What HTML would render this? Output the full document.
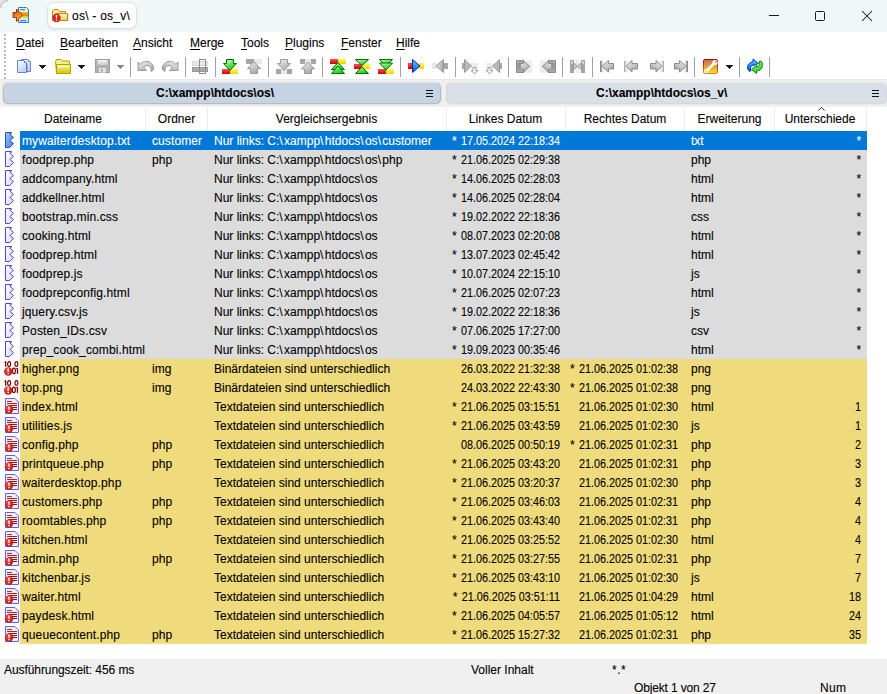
<!DOCTYPE html><html><head><meta charset="utf-8"><style>
*{margin:0;padding:0;box-sizing:border-box}
html,body{width:887px;height:694px;overflow:hidden;background:#fff}
body{position:relative;-webkit-text-stroke:0.1px currentColor;font-family:"Liberation Sans",sans-serif;font-size:12px;color:#000}
.a{position:absolute}
.t{position:absolute;white-space:pre;line-height:19px;height:19px}
.r{text-align:right}
.dt{letter-spacing:0;transform:scaleX(0.9);transform-origin:100% 50%}
.sp{letter-spacing:0.4px;font-size:13.5px;line-height:0}
svg{position:absolute;overflow:visible}
.u{text-decoration:underline;text-underline-offset:2px}
</style></head><body>

<div class="a" style="left:0;top:0;width:887px;height:32px;background:#eff7f7"></div>
<svg style="left:0;top:0" width="9" height="9"><path d="M0,0 H8 A8,8 0 0 0 0,8 Z" fill="#e4e6e6"/><path d="M0.5,8 A7.5,7.5 0 0 1 8,0.5" fill="none" stroke="#c8c8c8" stroke-width="1.3"/></svg>
<svg style="left:11px;top:5px" width="20" height="20" viewBox="0 0 20 20">
<defs><linearGradient id="lg1" x1="0" y1="0" x2="1" y2="1"><stop offset="0" stop-color="#ffffff"/><stop offset="1" stop-color="#c0dcf6"/></linearGradient>
<linearGradient id="lg2" x1="0" y1="0" x2="0.3" y2="1"><stop offset="0" stop-color="#c84020"/><stop offset="0.5" stop-color="#e87820"/><stop offset="1" stop-color="#f8d020"/></linearGradient></defs>
<path d="M7.5,2.5 H15.5 L17.5,4.5 V17.5 H7.5 Z" fill="url(#lg1)" stroke="#2a80d0"/>
<rect x="9" y="4" width="5" height="1.3" fill="#3a8ad8"/><rect x="9" y="7" width="8" height="5.5" fill="#f4c000"/><rect x="10" y="8.5" width="7" height="2.5" fill="#e49400"/><rect x="9" y="15" width="6" height="1.3" fill="#3a8ad8"/>
<path d="M2,7.5 H5.5 V4 L11.5,10 L5.5,16.5 V12.5 H2 Z" fill="url(#lg2)" stroke="#a82000" stroke-width="0.9"/>
</svg>
<div class="a" style="left:48px;top:3px;width:88px;height:25px;background:#fff;border-radius:6px;box-shadow:0 0 0 1px #dde2e2,0 1px 1px 1px rgba(0,0,0,0.06)"></div>
<svg style="left:48px;top:5px" width="22" height="22" viewBox="0 0 22 22">
<defs><linearGradient id="fg" x1="0" y1="0" x2="0" y2="1"><stop offset="0" stop-color="#fff6c0"/><stop offset="1" stop-color="#f0c850"/></linearGradient></defs>
<path d="M4.5,15.5 V6 L6,4.5 H10 L11.5,6.5 H17.5 V15.5 Z" fill="#fbe8a0" stroke="#c08a10"/>
<path d="M7.5,8.5 H19.5 V15.5 H4.5 Z" fill="url(#fg)" stroke="#c08a10"/>
<rect x="19.6" y="9" width="0.8" height="7" fill="#606080" opacity="0.5"/>
<circle cx="8.5" cy="13" r="4.2" fill="#d42424"/>
<path d="M7.7,10 H9.3 L9,13.6 H8 Z" fill="#fff"/><rect x="7.8" y="14.5" width="1.4" height="1.3" fill="#fff"/>
</svg>
<div class="t" style="left:72px;top:7px;letter-spacing:0.25px">os\ - os_v\</div>
<div class="a" style="left:769px;top:15px;width:10px;height:1px;background:#1a1a1a"></div>
<div class="a" style="left:815px;top:11px;width:10px;height:10px;border:1px solid #1a1a1a;border-radius:1.5px"></div>
<svg style="left:862px;top:11px" width="10" height="10"><path d="M0,0 L10,10 M10,0 L0,10" stroke="#1a1a1a" stroke-width="1.05"/></svg>
<div class="a" style="left:0;top:32px;width:887px;height:47px;background:#fff"></div>
<div class="a" style="left:4px;top:34px;width:2px;height:2px;background:#c4c4c4"></div><div class="a" style="left:4px;top:34px;width:1px;height:1px;background:#9a9a9a"></div>
<div class="a" style="left:4px;top:38px;width:2px;height:2px;background:#c4c4c4"></div><div class="a" style="left:4px;top:38px;width:1px;height:1px;background:#9a9a9a"></div>
<div class="a" style="left:4px;top:42px;width:2px;height:2px;background:#c4c4c4"></div><div class="a" style="left:4px;top:42px;width:1px;height:1px;background:#9a9a9a"></div>
<div class="a" style="left:4px;top:46px;width:2px;height:2px;background:#c4c4c4"></div><div class="a" style="left:4px;top:46px;width:1px;height:1px;background:#9a9a9a"></div>
<div class="a" style="left:4px;top:50px;width:2px;height:2px;background:#c4c4c4"></div><div class="a" style="left:4px;top:50px;width:1px;height:1px;background:#9a9a9a"></div>
<div class="a" style="left:4px;top:54px;width:2px;height:2px;background:#c4c4c4"></div><div class="a" style="left:4px;top:54px;width:1px;height:1px;background:#9a9a9a"></div>
<div class="a" style="left:4px;top:57px;width:2px;height:2px;background:#c4c4c4"></div><div class="a" style="left:4px;top:57px;width:1px;height:1px;background:#9a9a9a"></div>
<div class="a" style="left:4px;top:61px;width:2px;height:2px;background:#c4c4c4"></div><div class="a" style="left:4px;top:61px;width:1px;height:1px;background:#9a9a9a"></div>
<div class="a" style="left:4px;top:65px;width:2px;height:2px;background:#c4c4c4"></div><div class="a" style="left:4px;top:65px;width:1px;height:1px;background:#9a9a9a"></div>
<div class="a" style="left:4px;top:69px;width:2px;height:2px;background:#c4c4c4"></div><div class="a" style="left:4px;top:69px;width:1px;height:1px;background:#9a9a9a"></div>
<div class="a" style="left:4px;top:73px;width:2px;height:2px;background:#c4c4c4"></div><div class="a" style="left:4px;top:73px;width:1px;height:1px;background:#9a9a9a"></div>
<div class="a" style="left:4px;top:77px;width:2px;height:2px;background:#c4c4c4"></div><div class="a" style="left:4px;top:77px;width:1px;height:1px;background:#9a9a9a"></div>
<div class="t" style="left:16px;top:33px;line-height:20px;height:20px"><span class="u">D</span>atei</div>
<div class="t" style="left:60px;top:33px;line-height:20px;height:20px"><span class="u">B</span>earbeiten</div>
<div class="t" style="left:133px;top:33px;line-height:20px;height:20px"><span class="u">A</span>nsicht</div>
<div class="t" style="left:190px;top:33px;line-height:20px;height:20px"><span class="u">M</span>erge</div>
<div class="t" style="left:241px;top:33px;line-height:20px;height:20px"><span class="u">T</span>ools</div>
<div class="t" style="left:285px;top:33px;line-height:20px;height:20px"><span class="u">P</span>lugins</div>
<div class="t" style="left:341px;top:33px;line-height:20px;height:20px"><span class="u">F</span>enster</div>
<div class="t" style="left:396px;top:33px;line-height:20px;height:20px"><span class="u">H</span>ilfe</div>
<svg width="0" height="0" style="position:absolute"><defs><linearGradient id="gGreen" x1="0" y1="0" x2="0.6" y2="1"><stop offset="0" stop-color="#c0ffb0"/><stop offset="1" stop-color="#18c818"/></linearGradient><linearGradient id="gGray" x1="0" y1="0" x2="0.6" y2="1"><stop offset="0" stop-color="#f4f4f4"/><stop offset="1" stop-color="#a8a8a8"/></linearGradient><linearGradient id="gGrayH" x1="0" y1="0" x2="1" y2="0"><stop offset="0" stop-color="#f0f0f0"/><stop offset="1" stop-color="#a0a0a0"/></linearGradient><linearGradient id="gDoc" x1="0" y1="0" x2="0.7" y2="1"><stop offset="0" stop-color="#ffffff"/><stop offset="1" stop-color="#b8d0f4"/></linearGradient><linearGradient id="gFold" x1="0" y1="0" x2="0" y2="1"><stop offset="0" stop-color="#f8f090"/><stop offset="1" stop-color="#d8c800"/></linearGradient><linearGradient id="gOpt" x1="0" y1="0" x2="0" y2="1"><stop offset="0" stop-color="#d06858"/><stop offset="1" stop-color="#f8e020"/></linearGradient><linearGradient id="gOptB" x1="0" y1="0" x2="0" y2="1"><stop offset="0" stop-color="#a80000"/><stop offset="1" stop-color="#f08010"/></linearGradient><linearGradient id="gBlue" x1="0" y1="0" x2="0" y2="1"><stop offset="0" stop-color="#60d0ff"/><stop offset="1" stop-color="#0850d8"/></linearGradient><linearGradient id="gLO" x1="0" y1="0" x2="1" y2="1"><stop offset="0" stop-color="#ffffff"/><stop offset="1" stop-color="#d8d8f8"/></linearGradient><linearGradient id="gLOs" x1="0" y1="0" x2="1" y2="1"><stop offset="0" stop-color="#a0c8f0"/><stop offset="1" stop-color="#3c7fd8"/></linearGradient><linearGradient id="gRed" x1="0" y1="0" x2="0" y2="1"><stop offset="0" stop-color="#ff5050"/><stop offset="1" stop-color="#d00000"/></linearGradient><linearGradient id="gYel" x1="0" y1="0" x2="0" y2="1"><stop offset="0" stop-color="#fff860"/><stop offset="1" stop-color="#e8d800"/></linearGradient><linearGradient id="gSave" x1="0" y1="0" x2="0" y2="1"><stop offset="0" stop-color="#f8f8f8"/><stop offset="1" stop-color="#c8c8c8"/></linearGradient><radialGradient id="gExc" cx="0.4" cy="0.35" r="0.7"><stop offset="0" stop-color="#f05040"/><stop offset="1" stop-color="#b81010"/></radialGradient></defs></svg>
<svg style="left:14px;top:56px" width="20" height="20" viewBox="0 0 20 20"><path d="M7.5,3.5 H14 L16.5,6 V15.5 H7.5 Z" fill="url(#gDoc)" stroke="#6c80cc"/><path d="M3.5,4.5 H10 L12.5,7 V16.5 H3.5 Z" fill="url(#gDoc)" stroke="#6c80cc"/><rect x="12.6" y="7.5" width="0.9" height="9" fill="#405090" opacity="0.6"/><path d="M10,4.5 L12.5,7 H10 Z" fill="#5a9ae0"/><path d="M14,3.5 L16.5,6 H14 Z" fill="#5a9ae0"/></svg>
<div class="a" style="left:39px;top:65px;width:7px;height:1px;background:#1a1a1a"></div><div class="a" style="left:40px;top:66px;width:5px;height:1px;background:#1a1a1a"></div><div class="a" style="left:41px;top:67px;width:3px;height:1px;background:#1a1a1a"></div><div class="a" style="left:42px;top:68px;width:1px;height:1px;background:#1a1a1a"></div>
<svg style="left:54px;top:56px" width="20" height="20" viewBox="0 0 20 20"><path d="M1.5,5.5 L2.5,3.5 H7 L8.5,5 H15.5 V16.5 H2.5 Z" fill="#f4ee90" stroke="#b0a000"/><path d="M2.5,8.5 H16.5 V17.5 H2.5 Z" fill="url(#gFold)" stroke="#b0a000"/><rect x="4" y="9.5" width="11" height="2" fill="#fbf7c0"/></svg>
<div class="a" style="left:78px;top:65px;width:7px;height:1px;background:#1a1a1a"></div><div class="a" style="left:79px;top:66px;width:5px;height:1px;background:#1a1a1a"></div><div class="a" style="left:80px;top:67px;width:3px;height:1px;background:#1a1a1a"></div><div class="a" style="left:81px;top:68px;width:1px;height:1px;background:#1a1a1a"></div>
<svg style="left:93px;top:56px" width="20" height="20" viewBox="0 0 20 20"><rect x="2.5" y="3.5" width="14" height="13" fill="#b0b0b0" stroke="#9c9c9c"/><rect x="4.5" y="4" width="10" height="5" fill="url(#gSave)"/><rect x="6" y="12" width="7" height="4.5" fill="#e4e4e4"/><rect x="8" y="13" width="1.5" height="2.5" fill="#909090"/></svg>
<div class="a" style="left:117px;top:65px;width:7px;height:1px;background:#888"></div><div class="a" style="left:118px;top:66px;width:5px;height:1px;background:#888"></div><div class="a" style="left:119px;top:67px;width:3px;height:1px;background:#888"></div><div class="a" style="left:120px;top:68px;width:1px;height:1px;background:#888"></div>
<div class="a" style="left:130px;top:57px;width:1px;height:20px;background:#a0a0a0"></div>
<svg style="left:136px;top:57px" width="20" height="20" viewBox="0 0 20 20"><path d="M2,5 L4,7.5 C6,4.5 9,4 12,4.5 C16,5.5 18,9 17.5,12.5 L15,14.5 C15.5,11 14,8.5 11,8.5 C9,8.5 8,10 8.5,11.5 L10.5,13.5 H2 Z" fill="url(#gGray)" stroke="#999" stroke-width="1"/></svg>
<svg style="left:160px;top:57px" width="20" height="20" viewBox="0 0 20 20"><g transform="translate(20,0) scale(-1,1)"><path d="M2,5 L4,7.5 C6,4.5 9,4 12,4.5 C16,5.5 18,9 17.5,12.5 L15,14.5 C15.5,11 14,8.5 11,8.5 C9,8.5 8,10 8.5,11.5 L10.5,13.5 H2 Z" fill="url(#gGray)" stroke="#999" stroke-width="1"/></g></svg>
<div class="a" style="left:185px;top:57px;width:1px;height:20px;background:#a0a0a0"></div>
<svg style="left:190px;top:56px" width="20" height="20" viewBox="0 0 20 20"><rect x="2.5" y="5.5" width="15" height="4" fill="#e6e6e6" stroke="#dadada"/><rect x="2.5" y="11.5" width="15" height="4" fill="#acacac" stroke="#999"/><rect x="9.5" y="3.5" width="6" height="14" fill="none" stroke="#8c8c8c"/><rect x="10" y="4" width="5" height="1" fill="#fff"/><rect x="10" y="16" width="5" height="1" fill="#fff"/></svg>
<div class="a" style="left:215px;top:57px;width:1px;height:20px;background:#a0a0a0"></div>
<svg style="left:220px;top:56px" width="20" height="20" viewBox="0 0 20 20"><rect x="2" y="13" width="8" height="5" fill="url(#gRed)"/><rect x="10" y="13" width="8" height="5" fill="url(#gYel)"/><path d="M6.5,3.5 H13.5 V7.5 H16.5 L10,14.5 L3.5,7.5 H6.5 Z" fill="url(#gGreen)" stroke="#007000" stroke-width="1"/><path d="M8,5 H11 L9,7 Z" fill="#fff" opacity="0.7"/></svg>
<svg style="left:244px;top:56px" width="20" height="20" viewBox="0 0 20 20"><rect x="2" y="3" width="8" height="5" fill="#a8a8a8"/><rect x="10" y="3" width="8" height="5" fill="#e8e8e8"/><path d="M10,5.5 L16.5,12.5 H13.5 V17.5 H6.5 V12.5 H3.5 Z" fill="url(#gGray)" stroke="#999" stroke-width="1"/></svg>
<div class="a" style="left:268px;top:57px;width:1px;height:20px;background:#a0a0a0"></div>
<svg style="left:274px;top:56px" width="20" height="20" viewBox="0 0 20 20"><rect x="2" y="13" width="5" height="5" fill="#a4a4a4"/><rect x="7" y="13" width="6" height="5" fill="#e8e8e8"/><rect x="13" y="13" width="5" height="5" fill="#a4a4a4"/><path d="M6.5,3.5 H13.5 V7.5 H16.5 L10,14.5 L3.5,7.5 H6.5 Z" fill="url(#gGray)" stroke="#999" stroke-width="1"/></svg>
<svg style="left:298px;top:56px" width="20" height="20" viewBox="0 0 20 20"><rect x="2" y="3" width="5" height="5" fill="#a4a4a4"/><rect x="7" y="3" width="6" height="5" fill="#e8e8e8"/><rect x="13" y="3" width="5" height="5" fill="#a4a4a4"/><path d="M10,6 L16.5,13 H13.5 V17.5 H6.5 V13 H3.5 Z" fill="url(#gGray)" stroke="#999" stroke-width="1"/></svg>
<div class="a" style="left:322px;top:57px;width:1px;height:20px;background:#a0a0a0"></div>
<svg style="left:328px;top:56px" width="20" height="20" viewBox="0 0 20 20"><rect x="2" y="3" width="8" height="5" fill="url(#gRed)"/><rect x="10" y="3" width="8" height="5" fill="url(#gYel)"/><path d="M10,6.5 L16.5,13.5 H3.5 Z" fill="url(#gGreen)" stroke="#007000" stroke-width="1"/><path d="M10,10 L16.5,17.5 H3.5 Z" fill="url(#gGreen)" stroke="#007000" stroke-width="1"/></svg>
<svg style="left:352px;top:56px" width="20" height="20" viewBox="0 0 20 20"><rect x="2" y="8" width="8" height="5" fill="url(#gRed)"/><rect x="10" y="8" width="8" height="5" fill="url(#gYel)"/><path d="M3.5,3.5 H16.5 L10,9.5 Z" fill="url(#gGreen)" stroke="#007000" stroke-width="1"/><path d="M10,11 L16.5,17.5 H3.5 Z" fill="url(#gGreen)" stroke="#007000" stroke-width="1"/></svg>
<svg style="left:376px;top:56px" width="20" height="20" viewBox="0 0 20 20"><rect x="2" y="13" width="8" height="5" fill="url(#gRed)"/><rect x="10" y="13" width="8" height="5" fill="url(#gYel)"/><path d="M3.5,3.5 H16.5 L10,10 Z" fill="url(#gGreen)" stroke="#007000" stroke-width="1"/><path d="M3.5,7 H16.5 L10,14 Z" fill="url(#gGreen)" stroke="#007000" stroke-width="1"/></svg>
<div class="a" style="left:400px;top:57px;width:1px;height:20px;background:#a0a0a0"></div>
<svg style="left:406px;top:56px" width="20" height="20" viewBox="0 0 20 20"><rect x="2" y="7" width="5" height="6" fill="url(#gRed)"/><rect x="13" y="7" width="5" height="6" fill="url(#gYel)"/><path d="M6.5,3.5 L14,10 L6.5,16.5 Z" fill="url(#gBlue)" stroke="#0028a0"/></svg>
<svg style="left:430px;top:56px" width="20" height="20" viewBox="0 0 20 20"><rect x="2" y="7" width="5" height="6" fill="#e8e8e8"/><rect x="13" y="7" width="5" height="6" fill="#a8a8a8"/><path d="M13.5,3.5 L6,10 L13.5,16.5 Z" fill="url(#gGrayH)" stroke="#999"/></svg>
<div class="a" style="left:455px;top:57px;width:1px;height:20px;background:#a0a0a0"></div>
<svg style="left:460px;top:56px" width="20" height="20" viewBox="0 0 20 20"><rect x="2" y="7" width="3" height="6" fill="#a8a8a8"/><rect x="11" y="7" width="7" height="6" fill="#ececec"/><path d="M4.5,3.5 L11.5,10 L4.5,16.5 Z" fill="#b8b8b8" stroke="#999"/><path d="M13,11.5 H16 V14.5 H18 L14.5,17.8 L11,14.5 H13 Z" fill="#f4f4f4" stroke="#a0a0a0"/></svg>
<svg style="left:484px;top:56px" width="20" height="20" viewBox="0 0 20 20"><g transform="translate(20,0) scale(-1,1)"><rect x="2" y="7" width="3" height="6" fill="#a8a8a8"/><rect x="11" y="7" width="7" height="6" fill="#ececec"/><path d="M4.5,3.5 L11.5,10 L4.5,16.5 Z" fill="#b8b8b8" stroke="#999"/><path d="M13,11.5 H16 V14.5 H18 L14.5,17.8 L11,14.5 H13 Z" fill="#f4f4f4" stroke="#a0a0a0"/></g></svg>
<div class="a" style="left:508px;top:57px;width:1px;height:20px;background:#a0a0a0"></div>
<svg style="left:514px;top:56px" width="20" height="20" viewBox="0 0 20 20"><rect x="12" y="4" width="6" height="13" fill="#ececec"/><path d="M2.5,4.5 H9.5 V16.5 H2.5 Z" fill="#a8a8a8" stroke="#8c8c8c"/><path d="M4.5,7.5 H9.5 V4.5 L15.5,10.3 L9.5,16.5 V13 H4.5 Z" fill="url(#gGray)" stroke="#8c8c8c"/><rect x="5" y="8" width="2" height="4.5" fill="#9a9a9a"/></svg>
<svg style="left:538px;top:56px" width="20" height="20" viewBox="0 0 20 20"><g transform="translate(20,0) scale(-1,1)"><rect x="12" y="4" width="6" height="13" fill="#ececec"/><path d="M2.5,4.5 H9.5 V16.5 H2.5 Z" fill="#a8a8a8" stroke="#8c8c8c"/><path d="M4.5,7.5 H9.5 V4.5 L15.5,10.3 L9.5,16.5 V13 H4.5 Z" fill="url(#gGray)" stroke="#8c8c8c"/><rect x="5" y="8" width="2" height="4.5" fill="#9a9a9a"/></g></svg>
<div class="a" style="left:562px;top:57px;width:1px;height:20px;background:#a0a0a0"></div>
<svg style="left:568px;top:56px" width="20" height="20" viewBox="0 0 20 20"><rect x="7.5" y="4" width="4" height="13" fill="#ececec"/><rect x="2" y="4" width="4" height="13" fill="#a4a4a4"/><rect x="13" y="4" width="4" height="13" fill="#a4a4a4"/><path d="M5.5,6.5 L9.5,10.3 L5.5,14 Z" fill="#c8c8c8" stroke="#999"/><path d="M13.5,6.5 L9.5,10.3 L13.5,14 Z" fill="#c8c8c8" stroke="#999"/><rect x="3" y="5" width="2" height="3" fill="#d0d0d0"/><rect x="14" y="5" width="2" height="3" fill="#d0d0d0"/></svg>
<div class="a" style="left:592px;top:57px;width:1px;height:20px;background:#a0a0a0"></div>
<svg style="left:598px;top:56px" width="20" height="20" viewBox="0 0 20 20"><rect x="3.5" y="5" width="3" height="11" fill="#ececec"/><rect x="2" y="4.7" width="1.8" height="11.5" fill="#8c8c8c"/><path d="M4,10.3 L10.5,4.5 V7.5 H15.5 V13 H10.5 V16 Z" fill="url(#gGray)" stroke="#8c8c8c"/></svg>
<svg style="left:622px;top:56px" width="20" height="20" viewBox="0 0 20 20"><rect x="3.3" y="5" width="3" height="11" fill="#ececec"/><rect x="2.3" y="4.7" width="1" height="11.5" fill="#8c8c8c"/><path d="M4,10.3 L10,4.5 V7.5 H15.5 V13 H10 V16 Z" fill="url(#gGray)" stroke="#8c8c8c"/></svg>
<svg style="left:648px;top:56px" width="18" height="20" viewBox="0 0 18 20"><g transform="translate(18,0) scale(-1,1)"><rect x="3.3" y="5" width="3" height="11" fill="#ececec"/><rect x="2.3" y="4.7" width="1" height="11.5" fill="#8c8c8c"/><path d="M4,10.3 L10,4.5 V7.5 H15.5 V13 H10 V16 Z" fill="url(#gGray)" stroke="#8c8c8c"/></g></svg>
<svg style="left:672px;top:56px" width="18" height="20" viewBox="0 0 18 20"><g transform="translate(18,0) scale(-1,1)"><rect x="3.5" y="5" width="3" height="11" fill="#ececec"/><rect x="2" y="4.7" width="1.8" height="11.5" fill="#8c8c8c"/><path d="M4,10.3 L10.5,4.5 V7.5 H15.5 V13 H10.5 V16 Z" fill="url(#gGray)" stroke="#8c8c8c"/></g></svg>
<div class="a" style="left:694px;top:57px;width:1px;height:20px;background:#a0a0a0"></div>
<svg style="left:700px;top:56px" width="20" height="20" viewBox="0 0 20 20"><rect x="3.5" y="3.5" width="14" height="14" rx="1.5" fill="url(#gOpt)" stroke="url(#gOptB)"/><path d="M6,15.5 L14,7.5" stroke="#fff" stroke-width="2.5"/><circle cx="15" cy="6.5" r="2.6" fill="#fff"/><circle cx="5.8" cy="15.2" r="1.9" fill="#fff"/><path d="M14.5,5 L17,5.5 L16,7.5 Z" fill="#d07060"/><circle cx="5.8" cy="15.2" r="0.8" fill="#e8c020"/></svg>
<div class="a" style="left:726px;top:65px;width:7px;height:1px;background:#1a1a1a"></div><div class="a" style="left:727px;top:66px;width:5px;height:1px;background:#1a1a1a"></div><div class="a" style="left:728px;top:67px;width:3px;height:1px;background:#1a1a1a"></div><div class="a" style="left:729px;top:68px;width:1px;height:1px;background:#1a1a1a"></div>
<div class="a" style="left:739px;top:57px;width:1px;height:20px;background:#a0a0a0"></div>
<svg style="left:745px;top:56px" width="20" height="20" viewBox="0 0 20 20"><path d="M2.5,10.5 C3,8 5,6.5 8,5.5 V3 L13.5,7.5 L8.5,9.5 V8.5 C6.5,9.5 5.5,11 5.5,13 L6,14.5 L4.5,15.5 C3,14 2.3,12.5 2.5,10.5 Z" fill="url(#gBlue)" stroke="#0838c8"/><path d="M17.5,9.5 C17.3,12 15.5,14.5 11.5,15 V17.5 L6.5,13.5 L11.5,9.5 V11 C13.5,10.5 14.5,9 14.5,7.5 L14,5.5 L16,5 C17,6.3 17.6,7.8 17.5,9.5 Z" fill="url(#gGreen)" stroke="#009000"/></svg>
<div class="a" style="left:769px;top:57px;width:1px;height:20px;background:#a0a0a0"></div>
<div class="a" style="left:0;top:79px;width:887px;height:28px;background:#f0f0f0"></div>
<div class="a" style="left:0;top:79px;width:887px;height:1px;background:#e8e8e8"></div>
<div class="a" style="left:3.5px;top:82.5px;width:436px;height:20.5px;background:#c5d3e2;border-radius:4.5px;box-shadow:0 0.3px 1.5px 0.2px rgba(0,0,0,0.28)"></div>
<div class="a" style="left:447px;top:82.5px;width:439px;height:20.5px;background:#d8dfe6;border-radius:4.5px;box-shadow:0 0.3px 1.5px 0.2px rgba(0,0,0,0.12)"></div>
<div class="t" style="left:156px;top:83px;line-height:20px;font-weight:bold">C:\xampp\htdocs\os\</div>
<div class="t" style="left:596px;top:83px;line-height:20px;font-weight:bold">C:\xampp\htdocs\os_v\</div>
<div class="a" style="left:426px;top:90px;width:7px;height:1px;background:#111"></div>
<div class="a" style="left:426px;top:93px;width:7px;height:1px;background:#111"></div>
<div class="a" style="left:426px;top:96px;width:7px;height:1px;background:#111"></div>
<div class="a" style="left:872px;top:90px;width:7px;height:1px;background:#111"></div>
<div class="a" style="left:872px;top:93px;width:7px;height:1px;background:#111"></div>
<div class="a" style="left:872px;top:96px;width:7px;height:1px;background:#111"></div>
<div class="t" style="left:0px;top:107px;width:146px;text-align:center;line-height:24px;height:24px">Dateiname</div>
<div class="a" style="left:145px;top:107px;width:1px;height:24px;background:#ececec"></div>
<div class="t" style="left:146px;top:107px;width:61px;text-align:center;line-height:24px;height:24px">Ordner</div>
<div class="a" style="left:207px;top:107px;width:1px;height:24px;background:#ececec"></div>
<div class="t" style="left:207px;top:107px;width:239px;text-align:center;line-height:24px;height:24px">Vergleichsergebnis</div>
<div class="a" style="left:446px;top:107px;width:1px;height:24px;background:#ececec"></div>
<div class="t" style="left:446px;top:107px;width:119px;text-align:center;line-height:24px;height:24px">Linkes Datum</div>
<div class="a" style="left:565px;top:107px;width:1px;height:24px;background:#ececec"></div>
<div class="t" style="left:565px;top:107px;width:120px;text-align:center;line-height:24px;height:24px">Rechtes Datum</div>
<div class="a" style="left:684px;top:107px;width:1px;height:24px;background:#ececec"></div>
<div class="t" style="left:685px;top:107px;width:89px;text-align:center;line-height:24px;height:24px">Erweiterung</div>
<div class="a" style="left:774px;top:107px;width:1px;height:24px;background:#ececec"></div>
<div class="t" style="left:774px;top:107px;width:92px;text-align:center;line-height:24px;height:24px">Unterschiede</div>
<div class="a" style="left:866px;top:107px;width:1px;height:24px;background:#ececec"></div>
<svg style="left:817px;top:106px" width="9" height="6"><path d="M1.3,4.6 L4.5,1.4 L7.7,4.6" fill="none" stroke="#333" stroke-width="1"/></svg>
<div class="a" style="left:20px;top:131px;width:847px;height:19px;background:#0078d7"></div>
<svg style="left:5px;top:132px" width="10" height="17" viewBox="0 0 10 17"><path d="M0.5,0.5 H6.5 V1.3 L4.8,2 L8.5,5.5 L4.8,8.5 L8.5,11.5 L4.5,15.5 H0.5 Z" fill="url(#gLOs)" stroke="#2050c0" stroke-width="1"/></svg>
<div class="t" style="left:22px;letter-spacing:0.12px;top:132px;color:#fff">mywaiterdesktop.txt</div>
<div class="t" style="left:152px;letter-spacing:0.1px;top:132px;color:#fff">customer</div>
<div class="t" style="left:214px;top:132px;color:#fff">Nur links: C:<span style="letter-spacing:1.4px">\</span>xampp<span style="letter-spacing:1.4px">\</span>htdocs<span style="letter-spacing:1.4px">\</span>os<span style="letter-spacing:1.4px">\</span>customer</div>
<div class="t r dt" style="left:425px;width:135px;top:132px;color:#fff"><span class="sp">* </span>17.05.2024 22:18:34</div>
<div class="t" style="left:691px;top:132px;color:#fff">txt</div>
<div class="t r dt" style="left:773px;width:88px;top:132px;color:#fff"><span style="position:relative;top:-1px;left:0px;font-size:13px">*</span></div>
<div class="a" style="left:20px;top:150px;width:847px;height:19px;background:#dcdcdc"></div>
<svg style="left:5px;top:151px" width="10" height="17" viewBox="0 0 10 17"><path d="M0.5,0.5 H6.5 V1.3 L4.8,2 L8.5,5.5 L4.8,8.5 L8.5,11.5 L4.5,15.5 H0.5 Z" fill="url(#gLO)" stroke="#4848e8" stroke-width="1"/></svg>
<div class="t" style="left:22px;letter-spacing:0.12px;top:151px;color:#000">foodprep.php</div>
<div class="t" style="left:152px;letter-spacing:0.1px;top:151px;color:#000">php</div>
<div class="t" style="left:214px;top:151px;color:#000">Nur links: C:<span style="letter-spacing:1.4px">\</span>xampp<span style="letter-spacing:1.4px">\</span>htdocs<span style="letter-spacing:1.4px">\</span>os<span style="letter-spacing:1.4px">\</span>php</div>
<div class="t r dt" style="left:425px;width:135px;top:151px;color:#000"><span class="sp">* </span>21.06.2025 02:29:38</div>
<div class="t" style="left:691px;top:151px;color:#000">php</div>
<div class="t r dt" style="left:773px;width:88px;top:151px;color:#000"><span style="position:relative;top:-1px;left:0px;font-size:13px">*</span></div>
<div class="a" style="left:20px;top:169px;width:847px;height:19px;background:#dcdcdc"></div>
<svg style="left:5px;top:170px" width="10" height="17" viewBox="0 0 10 17"><path d="M0.5,0.5 H6.5 V1.3 L4.8,2 L8.5,5.5 L4.8,8.5 L8.5,11.5 L4.5,15.5 H0.5 Z" fill="url(#gLO)" stroke="#4848e8" stroke-width="1"/></svg>
<div class="t" style="left:22px;letter-spacing:0.12px;top:170px;color:#000">addcompany.html</div>
<div class="t" style="left:214px;top:170px;color:#000">Nur links: C:<span style="letter-spacing:1.4px">\</span>xampp<span style="letter-spacing:1.4px">\</span>htdocs<span style="letter-spacing:1.4px">\</span>os</div>
<div class="t r dt" style="left:425px;width:135px;top:170px;color:#000"><span class="sp">* </span>14.06.2025 02:28:03</div>
<div class="t" style="left:691px;top:170px;color:#000">html</div>
<div class="t r dt" style="left:773px;width:88px;top:170px;color:#000"><span style="position:relative;top:-1px;left:0px;font-size:13px">*</span></div>
<div class="a" style="left:20px;top:188px;width:847px;height:19px;background:#dcdcdc"></div>
<svg style="left:5px;top:189px" width="10" height="17" viewBox="0 0 10 17"><path d="M0.5,0.5 H6.5 V1.3 L4.8,2 L8.5,5.5 L4.8,8.5 L8.5,11.5 L4.5,15.5 H0.5 Z" fill="url(#gLO)" stroke="#4848e8" stroke-width="1"/></svg>
<div class="t" style="left:22px;letter-spacing:0.12px;top:189px;color:#000">addkellner.html</div>
<div class="t" style="left:214px;top:189px;color:#000">Nur links: C:<span style="letter-spacing:1.4px">\</span>xampp<span style="letter-spacing:1.4px">\</span>htdocs<span style="letter-spacing:1.4px">\</span>os</div>
<div class="t r dt" style="left:425px;width:135px;top:189px;color:#000"><span class="sp">* </span>14.06.2025 02:28:04</div>
<div class="t" style="left:691px;top:189px;color:#000">html</div>
<div class="t r dt" style="left:773px;width:88px;top:189px;color:#000"><span style="position:relative;top:-1px;left:0px;font-size:13px">*</span></div>
<div class="a" style="left:20px;top:207px;width:847px;height:19px;background:#dcdcdc"></div>
<svg style="left:5px;top:208px" width="10" height="17" viewBox="0 0 10 17"><path d="M0.5,0.5 H6.5 V1.3 L4.8,2 L8.5,5.5 L4.8,8.5 L8.5,11.5 L4.5,15.5 H0.5 Z" fill="url(#gLO)" stroke="#4848e8" stroke-width="1"/></svg>
<div class="t" style="left:22px;letter-spacing:0.12px;top:208px;color:#000">bootstrap.min.css</div>
<div class="t" style="left:214px;top:208px;color:#000">Nur links: C:<span style="letter-spacing:1.4px">\</span>xampp<span style="letter-spacing:1.4px">\</span>htdocs<span style="letter-spacing:1.4px">\</span>os</div>
<div class="t r dt" style="left:425px;width:135px;top:208px;color:#000"><span class="sp">* </span>19.02.2022 22:18:36</div>
<div class="t" style="left:691px;top:208px;color:#000">css</div>
<div class="t r dt" style="left:773px;width:88px;top:208px;color:#000"><span style="position:relative;top:-1px;left:0px;font-size:13px">*</span></div>
<div class="a" style="left:20px;top:226px;width:847px;height:19px;background:#dcdcdc"></div>
<svg style="left:5px;top:227px" width="10" height="17" viewBox="0 0 10 17"><path d="M0.5,0.5 H6.5 V1.3 L4.8,2 L8.5,5.5 L4.8,8.5 L8.5,11.5 L4.5,15.5 H0.5 Z" fill="url(#gLO)" stroke="#4848e8" stroke-width="1"/></svg>
<div class="t" style="left:22px;letter-spacing:0.12px;top:227px;color:#000">cooking.html</div>
<div class="t" style="left:214px;top:227px;color:#000">Nur links: C:<span style="letter-spacing:1.4px">\</span>xampp<span style="letter-spacing:1.4px">\</span>htdocs<span style="letter-spacing:1.4px">\</span>os</div>
<div class="t r dt" style="left:425px;width:135px;top:227px;color:#000"><span class="sp">* </span>08.07.2023 02:20:08</div>
<div class="t" style="left:691px;top:227px;color:#000">html</div>
<div class="t r dt" style="left:773px;width:88px;top:227px;color:#000"><span style="position:relative;top:-1px;left:0px;font-size:13px">*</span></div>
<div class="a" style="left:20px;top:245px;width:847px;height:19px;background:#dcdcdc"></div>
<svg style="left:5px;top:246px" width="10" height="17" viewBox="0 0 10 17"><path d="M0.5,0.5 H6.5 V1.3 L4.8,2 L8.5,5.5 L4.8,8.5 L8.5,11.5 L4.5,15.5 H0.5 Z" fill="url(#gLO)" stroke="#4848e8" stroke-width="1"/></svg>
<div class="t" style="left:22px;letter-spacing:0.12px;top:246px;color:#000">foodprep.html</div>
<div class="t" style="left:214px;top:246px;color:#000">Nur links: C:<span style="letter-spacing:1.4px">\</span>xampp<span style="letter-spacing:1.4px">\</span>htdocs<span style="letter-spacing:1.4px">\</span>os</div>
<div class="t r dt" style="left:425px;width:135px;top:246px;color:#000"><span class="sp">* </span>13.07.2023 02:45:42</div>
<div class="t" style="left:691px;top:246px;color:#000">html</div>
<div class="t r dt" style="left:773px;width:88px;top:246px;color:#000"><span style="position:relative;top:-1px;left:0px;font-size:13px">*</span></div>
<div class="a" style="left:20px;top:264px;width:847px;height:19px;background:#dcdcdc"></div>
<svg style="left:5px;top:265px" width="10" height="17" viewBox="0 0 10 17"><path d="M0.5,0.5 H6.5 V1.3 L4.8,2 L8.5,5.5 L4.8,8.5 L8.5,11.5 L4.5,15.5 H0.5 Z" fill="url(#gLO)" stroke="#4848e8" stroke-width="1"/></svg>
<div class="t" style="left:22px;letter-spacing:0.12px;top:265px;color:#000">foodprep.js</div>
<div class="t" style="left:214px;top:265px;color:#000">Nur links: C:<span style="letter-spacing:1.4px">\</span>xampp<span style="letter-spacing:1.4px">\</span>htdocs<span style="letter-spacing:1.4px">\</span>os</div>
<div class="t r dt" style="left:425px;width:135px;top:265px;color:#000"><span class="sp">* </span>10.07.2024 22:15:10</div>
<div class="t" style="left:691px;top:265px;color:#000">js</div>
<div class="t r dt" style="left:773px;width:88px;top:265px;color:#000"><span style="position:relative;top:-1px;left:0px;font-size:13px">*</span></div>
<div class="a" style="left:20px;top:283px;width:847px;height:19px;background:#dcdcdc"></div>
<svg style="left:5px;top:284px" width="10" height="17" viewBox="0 0 10 17"><path d="M0.5,0.5 H6.5 V1.3 L4.8,2 L8.5,5.5 L4.8,8.5 L8.5,11.5 L4.5,15.5 H0.5 Z" fill="url(#gLO)" stroke="#4848e8" stroke-width="1"/></svg>
<div class="t" style="left:22px;letter-spacing:0.12px;top:284px;color:#000">foodprepconfig.html</div>
<div class="t" style="left:214px;top:284px;color:#000">Nur links: C:<span style="letter-spacing:1.4px">\</span>xampp<span style="letter-spacing:1.4px">\</span>htdocs<span style="letter-spacing:1.4px">\</span>os</div>
<div class="t r dt" style="left:425px;width:135px;top:284px;color:#000"><span class="sp">* </span>21.06.2025 02:07:23</div>
<div class="t" style="left:691px;top:284px;color:#000">html</div>
<div class="t r dt" style="left:773px;width:88px;top:284px;color:#000"><span style="position:relative;top:-1px;left:0px;font-size:13px">*</span></div>
<div class="a" style="left:20px;top:302px;width:847px;height:19px;background:#dcdcdc"></div>
<svg style="left:5px;top:303px" width="10" height="17" viewBox="0 0 10 17"><path d="M0.5,0.5 H6.5 V1.3 L4.8,2 L8.5,5.5 L4.8,8.5 L8.5,11.5 L4.5,15.5 H0.5 Z" fill="url(#gLO)" stroke="#4848e8" stroke-width="1"/></svg>
<div class="t" style="left:22px;letter-spacing:0.12px;top:303px;color:#000">jquery.csv.js</div>
<div class="t" style="left:214px;top:303px;color:#000">Nur links: C:<span style="letter-spacing:1.4px">\</span>xampp<span style="letter-spacing:1.4px">\</span>htdocs<span style="letter-spacing:1.4px">\</span>os</div>
<div class="t r dt" style="left:425px;width:135px;top:303px;color:#000"><span class="sp">* </span>19.02.2022 22:18:36</div>
<div class="t" style="left:691px;top:303px;color:#000">js</div>
<div class="t r dt" style="left:773px;width:88px;top:303px;color:#000"><span style="position:relative;top:-1px;left:0px;font-size:13px">*</span></div>
<div class="a" style="left:20px;top:321px;width:847px;height:19px;background:#dcdcdc"></div>
<svg style="left:5px;top:322px" width="10" height="17" viewBox="0 0 10 17"><path d="M0.5,0.5 H6.5 V1.3 L4.8,2 L8.5,5.5 L4.8,8.5 L8.5,11.5 L4.5,15.5 H0.5 Z" fill="url(#gLO)" stroke="#4848e8" stroke-width="1"/></svg>
<div class="t" style="left:22px;letter-spacing:0.12px;top:322px;color:#000">Posten_IDs.csv</div>
<div class="t" style="left:214px;top:322px;color:#000">Nur links: C:<span style="letter-spacing:1.4px">\</span>xampp<span style="letter-spacing:1.4px">\</span>htdocs<span style="letter-spacing:1.4px">\</span>os</div>
<div class="t r dt" style="left:425px;width:135px;top:322px;color:#000"><span class="sp">* </span>07.06.2025 17:27:00</div>
<div class="t" style="left:691px;top:322px;color:#000">csv</div>
<div class="t r dt" style="left:773px;width:88px;top:322px;color:#000"><span style="position:relative;top:-1px;left:0px;font-size:13px">*</span></div>
<div class="a" style="left:20px;top:340px;width:847px;height:19px;background:#dcdcdc"></div>
<svg style="left:5px;top:341px" width="10" height="17" viewBox="0 0 10 17"><path d="M0.5,0.5 H6.5 V1.3 L4.8,2 L8.5,5.5 L4.8,8.5 L8.5,11.5 L4.5,15.5 H0.5 Z" fill="url(#gLO)" stroke="#4848e8" stroke-width="1"/></svg>
<div class="t" style="left:22px;letter-spacing:0.12px;top:341px;color:#000">prep_cook_combi.html</div>
<div class="t" style="left:214px;top:341px;color:#000">Nur links: C:<span style="letter-spacing:1.4px">\</span>xampp<span style="letter-spacing:1.4px">\</span>htdocs<span style="letter-spacing:1.4px">\</span>os</div>
<div class="t r dt" style="left:425px;width:135px;top:341px;color:#000"><span class="sp">* </span>19.09.2023 00:35:46</div>
<div class="t" style="left:691px;top:341px;color:#000">html</div>
<div class="t r dt" style="left:773px;width:88px;top:341px;color:#000"><span style="position:relative;top:-1px;left:0px;font-size:13px">*</span></div>
<div class="a" style="left:20px;top:359px;width:847px;height:19px;background:#efdb7c"></div>
<svg style="left:0px;top:359px" width="20" height="19" viewBox="0 0 20 19"><rect x="5" y="2.3" width="1.3" height="5.5" fill="#800000"/><path d="M4.3,3.6 L5.6,2.3" stroke="#800000" stroke-width="1"/><ellipse cx="9.1" cy="5" rx="1.5" ry="2.45" fill="none" stroke="#800000" stroke-width="1.2"/><ellipse cx="16.4" cy="5" rx="1.45" ry="2.45" fill="none" stroke="#800000" stroke-width="1.2"/><ellipse cx="13.9" cy="11.9" rx="1.45" ry="2.7" fill="none" stroke="#800000" stroke-width="1.2"/><rect x="16.8" y="9.1" width="1.3" height="5.8" fill="#800000"/><path d="M16,10.3 L17.2,9.1" stroke="#800000" stroke-width="1"/><circle cx="8.2" cy="12.5" r="4.2" fill="url(#gExc)"/><path d="M7.4,9.4 H9 L8.7,13.2 H7.7 Z" fill="#fff"/><rect x="7.5" y="14" width="1.4" height="1.3" fill="#fff"/></svg>
<div class="t" style="left:22px;letter-spacing:0.12px;top:360px;color:#000">higher.png</div>
<div class="t" style="left:152px;letter-spacing:0.1px;top:360px;color:#000">img</div>
<div class="t" style="left:214px;top:360px;color:#000">Binärdateien sind unterschiedlich</div>
<div class="t r dt" style="left:425px;width:135px;top:360px;color:#000">26.03.2022 21:32:38</div>
<div class="t r dt" style="left:543px;width:135px;top:360px;color:#000"><span class="sp">* </span>21.06.2025 01:02:38</div>
<div class="t" style="left:691px;top:360px;color:#000">png</div>
<div class="a" style="left:20px;top:378px;width:847px;height:19px;background:#efdb7c"></div>
<svg style="left:0px;top:378px" width="20" height="19" viewBox="0 0 20 19"><rect x="5" y="2.3" width="1.3" height="5.5" fill="#800000"/><path d="M4.3,3.6 L5.6,2.3" stroke="#800000" stroke-width="1"/><ellipse cx="9.1" cy="5" rx="1.5" ry="2.45" fill="none" stroke="#800000" stroke-width="1.2"/><ellipse cx="16.4" cy="5" rx="1.45" ry="2.45" fill="none" stroke="#800000" stroke-width="1.2"/><ellipse cx="13.9" cy="11.9" rx="1.45" ry="2.7" fill="none" stroke="#800000" stroke-width="1.2"/><rect x="16.8" y="9.1" width="1.3" height="5.8" fill="#800000"/><path d="M16,10.3 L17.2,9.1" stroke="#800000" stroke-width="1"/><circle cx="8.2" cy="12.5" r="4.2" fill="url(#gExc)"/><path d="M7.4,9.4 H9 L8.7,13.2 H7.7 Z" fill="#fff"/><rect x="7.5" y="14" width="1.4" height="1.3" fill="#fff"/></svg>
<div class="t" style="left:22px;letter-spacing:0.12px;top:379px;color:#000">top.png</div>
<div class="t" style="left:152px;letter-spacing:0.1px;top:379px;color:#000">img</div>
<div class="t" style="left:214px;top:379px;color:#000">Binärdateien sind unterschiedlich</div>
<div class="t r dt" style="left:425px;width:135px;top:379px;color:#000">24.03.2022 22:43:30</div>
<div class="t r dt" style="left:543px;width:135px;top:379px;color:#000"><span class="sp">* </span>21.06.2025 01:02:38</div>
<div class="t" style="left:691px;top:379px;color:#000">png</div>
<div class="a" style="left:20px;top:397px;width:847px;height:19px;background:#efdb7c"></div>
<svg style="left:4px;top:398px" width="16" height="17" viewBox="0 0 16 17"><path d="M1.5,0.5 H11 L14.5,4 V15.5 H1.5 Z" fill="#eeeefc" stroke="#6060f0"/><rect x="3" y="3" width="5" height="1" fill="#d02020"/><rect x="3" y="5" width="10" height="1" fill="#c01818"/><rect x="4" y="7" width="9" height="1" fill="#a01010"/><rect x="4" y="9" width="9" height="1" fill="#901010"/><rect x="4" y="11" width="9" height="1" fill="#801010"/><circle cx="5" cy="11.5" r="4.2" fill="url(#gExc)"/><path d="M4.2,8.4 H5.8 L5.5,12.2 H4.5 Z" fill="#fff"/><rect x="4.3" y="13" width="1.4" height="1.3" fill="#fff"/></svg>
<div class="t" style="left:22px;letter-spacing:0.12px;top:398px;color:#000">index.html</div>
<div class="t" style="left:214px;top:398px;color:#000">Textdateien sind unterschiedlich</div>
<div class="t r dt" style="left:425px;width:135px;top:398px;color:#000"><span class="sp">* </span>21.06.2025 03:15:51</div>
<div class="t r dt" style="left:543px;width:135px;top:398px;color:#000">21.06.2025 01:02:30</div>
<div class="t" style="left:691px;top:398px;color:#000">html</div>
<div class="t r dt" style="left:773px;width:88px;top:398px;color:#000">1</div>
<div class="a" style="left:20px;top:416px;width:847px;height:19px;background:#efdb7c"></div>
<svg style="left:4px;top:417px" width="16" height="17" viewBox="0 0 16 17"><path d="M1.5,0.5 H11 L14.5,4 V15.5 H1.5 Z" fill="#eeeefc" stroke="#6060f0"/><rect x="3" y="3" width="5" height="1" fill="#d02020"/><rect x="3" y="5" width="10" height="1" fill="#c01818"/><rect x="4" y="7" width="9" height="1" fill="#a01010"/><rect x="4" y="9" width="9" height="1" fill="#901010"/><rect x="4" y="11" width="9" height="1" fill="#801010"/><circle cx="5" cy="11.5" r="4.2" fill="url(#gExc)"/><path d="M4.2,8.4 H5.8 L5.5,12.2 H4.5 Z" fill="#fff"/><rect x="4.3" y="13" width="1.4" height="1.3" fill="#fff"/></svg>
<div class="t" style="left:22px;letter-spacing:0.12px;top:417px;color:#000">utilities.js</div>
<div class="t" style="left:214px;top:417px;color:#000">Textdateien sind unterschiedlich</div>
<div class="t r dt" style="left:425px;width:135px;top:417px;color:#000"><span class="sp">* </span>21.06.2025 03:43:59</div>
<div class="t r dt" style="left:543px;width:135px;top:417px;color:#000">21.06.2025 01:02:30</div>
<div class="t" style="left:691px;top:417px;color:#000">js</div>
<div class="t r dt" style="left:773px;width:88px;top:417px;color:#000">1</div>
<div class="a" style="left:20px;top:435px;width:847px;height:19px;background:#efdb7c"></div>
<svg style="left:4px;top:436px" width="16" height="17" viewBox="0 0 16 17"><path d="M1.5,0.5 H11 L14.5,4 V15.5 H1.5 Z" fill="#eeeefc" stroke="#6060f0"/><rect x="3" y="3" width="5" height="1" fill="#d02020"/><rect x="3" y="5" width="10" height="1" fill="#c01818"/><rect x="4" y="7" width="9" height="1" fill="#a01010"/><rect x="4" y="9" width="9" height="1" fill="#901010"/><rect x="4" y="11" width="9" height="1" fill="#801010"/><circle cx="5" cy="11.5" r="4.2" fill="url(#gExc)"/><path d="M4.2,8.4 H5.8 L5.5,12.2 H4.5 Z" fill="#fff"/><rect x="4.3" y="13" width="1.4" height="1.3" fill="#fff"/></svg>
<div class="t" style="left:22px;letter-spacing:0.12px;top:436px;color:#000">config.php</div>
<div class="t" style="left:152px;letter-spacing:0.1px;top:436px;color:#000">php</div>
<div class="t" style="left:214px;top:436px;color:#000">Textdateien sind unterschiedlich</div>
<div class="t r dt" style="left:425px;width:135px;top:436px;color:#000">08.06.2025 00:50:19</div>
<div class="t r dt" style="left:543px;width:135px;top:436px;color:#000"><span class="sp">* </span>21.06.2025 01:02:31</div>
<div class="t" style="left:691px;top:436px;color:#000">php</div>
<div class="t r dt" style="left:773px;width:88px;top:436px;color:#000">2</div>
<div class="a" style="left:20px;top:454px;width:847px;height:19px;background:#efdb7c"></div>
<svg style="left:4px;top:455px" width="16" height="17" viewBox="0 0 16 17"><path d="M1.5,0.5 H11 L14.5,4 V15.5 H1.5 Z" fill="#eeeefc" stroke="#6060f0"/><rect x="3" y="3" width="5" height="1" fill="#d02020"/><rect x="3" y="5" width="10" height="1" fill="#c01818"/><rect x="4" y="7" width="9" height="1" fill="#a01010"/><rect x="4" y="9" width="9" height="1" fill="#901010"/><rect x="4" y="11" width="9" height="1" fill="#801010"/><circle cx="5" cy="11.5" r="4.2" fill="url(#gExc)"/><path d="M4.2,8.4 H5.8 L5.5,12.2 H4.5 Z" fill="#fff"/><rect x="4.3" y="13" width="1.4" height="1.3" fill="#fff"/></svg>
<div class="t" style="left:22px;letter-spacing:0.12px;top:455px;color:#000">printqueue.php</div>
<div class="t" style="left:152px;letter-spacing:0.1px;top:455px;color:#000">php</div>
<div class="t" style="left:214px;top:455px;color:#000">Textdateien sind unterschiedlich</div>
<div class="t r dt" style="left:425px;width:135px;top:455px;color:#000"><span class="sp">* </span>21.06.2025 03:43:20</div>
<div class="t r dt" style="left:543px;width:135px;top:455px;color:#000">21.06.2025 01:02:31</div>
<div class="t" style="left:691px;top:455px;color:#000">php</div>
<div class="t r dt" style="left:773px;width:88px;top:455px;color:#000">3</div>
<div class="a" style="left:20px;top:473px;width:847px;height:19px;background:#efdb7c"></div>
<svg style="left:4px;top:474px" width="16" height="17" viewBox="0 0 16 17"><path d="M1.5,0.5 H11 L14.5,4 V15.5 H1.5 Z" fill="#eeeefc" stroke="#6060f0"/><rect x="3" y="3" width="5" height="1" fill="#d02020"/><rect x="3" y="5" width="10" height="1" fill="#c01818"/><rect x="4" y="7" width="9" height="1" fill="#a01010"/><rect x="4" y="9" width="9" height="1" fill="#901010"/><rect x="4" y="11" width="9" height="1" fill="#801010"/><circle cx="5" cy="11.5" r="4.2" fill="url(#gExc)"/><path d="M4.2,8.4 H5.8 L5.5,12.2 H4.5 Z" fill="#fff"/><rect x="4.3" y="13" width="1.4" height="1.3" fill="#fff"/></svg>
<div class="t" style="left:22px;letter-spacing:0.12px;top:474px;color:#000">waiterdesktop.php</div>
<div class="t" style="left:214px;top:474px;color:#000">Textdateien sind unterschiedlich</div>
<div class="t r dt" style="left:425px;width:135px;top:474px;color:#000"><span class="sp">* </span>21.06.2025 03:20:37</div>
<div class="t r dt" style="left:543px;width:135px;top:474px;color:#000">21.06.2025 01:02:30</div>
<div class="t" style="left:691px;top:474px;color:#000">php</div>
<div class="t r dt" style="left:773px;width:88px;top:474px;color:#000">3</div>
<div class="a" style="left:20px;top:492px;width:847px;height:19px;background:#efdb7c"></div>
<svg style="left:4px;top:493px" width="16" height="17" viewBox="0 0 16 17"><path d="M1.5,0.5 H11 L14.5,4 V15.5 H1.5 Z" fill="#eeeefc" stroke="#6060f0"/><rect x="3" y="3" width="5" height="1" fill="#d02020"/><rect x="3" y="5" width="10" height="1" fill="#c01818"/><rect x="4" y="7" width="9" height="1" fill="#a01010"/><rect x="4" y="9" width="9" height="1" fill="#901010"/><rect x="4" y="11" width="9" height="1" fill="#801010"/><circle cx="5" cy="11.5" r="4.2" fill="url(#gExc)"/><path d="M4.2,8.4 H5.8 L5.5,12.2 H4.5 Z" fill="#fff"/><rect x="4.3" y="13" width="1.4" height="1.3" fill="#fff"/></svg>
<div class="t" style="left:22px;letter-spacing:0.12px;top:493px;color:#000">customers.php</div>
<div class="t" style="left:152px;letter-spacing:0.1px;top:493px;color:#000">php</div>
<div class="t" style="left:214px;top:493px;color:#000">Textdateien sind unterschiedlich</div>
<div class="t r dt" style="left:425px;width:135px;top:493px;color:#000"><span class="sp">* </span>21.06.2025 03:46:03</div>
<div class="t r dt" style="left:543px;width:135px;top:493px;color:#000">21.06.2025 01:02:31</div>
<div class="t" style="left:691px;top:493px;color:#000">php</div>
<div class="t r dt" style="left:773px;width:88px;top:493px;color:#000">4</div>
<div class="a" style="left:20px;top:511px;width:847px;height:19px;background:#efdb7c"></div>
<svg style="left:4px;top:512px" width="16" height="17" viewBox="0 0 16 17"><path d="M1.5,0.5 H11 L14.5,4 V15.5 H1.5 Z" fill="#eeeefc" stroke="#6060f0"/><rect x="3" y="3" width="5" height="1" fill="#d02020"/><rect x="3" y="5" width="10" height="1" fill="#c01818"/><rect x="4" y="7" width="9" height="1" fill="#a01010"/><rect x="4" y="9" width="9" height="1" fill="#901010"/><rect x="4" y="11" width="9" height="1" fill="#801010"/><circle cx="5" cy="11.5" r="4.2" fill="url(#gExc)"/><path d="M4.2,8.4 H5.8 L5.5,12.2 H4.5 Z" fill="#fff"/><rect x="4.3" y="13" width="1.4" height="1.3" fill="#fff"/></svg>
<div class="t" style="left:22px;letter-spacing:0.12px;top:512px;color:#000">roomtables.php</div>
<div class="t" style="left:152px;letter-spacing:0.1px;top:512px;color:#000">php</div>
<div class="t" style="left:214px;top:512px;color:#000">Textdateien sind unterschiedlich</div>
<div class="t r dt" style="left:425px;width:135px;top:512px;color:#000"><span class="sp">* </span>21.06.2025 03:43:40</div>
<div class="t r dt" style="left:543px;width:135px;top:512px;color:#000">21.06.2025 01:02:31</div>
<div class="t" style="left:691px;top:512px;color:#000">php</div>
<div class="t r dt" style="left:773px;width:88px;top:512px;color:#000">4</div>
<div class="a" style="left:20px;top:530px;width:847px;height:19px;background:#efdb7c"></div>
<svg style="left:4px;top:531px" width="16" height="17" viewBox="0 0 16 17"><path d="M1.5,0.5 H11 L14.5,4 V15.5 H1.5 Z" fill="#eeeefc" stroke="#6060f0"/><rect x="3" y="3" width="5" height="1" fill="#d02020"/><rect x="3" y="5" width="10" height="1" fill="#c01818"/><rect x="4" y="7" width="9" height="1" fill="#a01010"/><rect x="4" y="9" width="9" height="1" fill="#901010"/><rect x="4" y="11" width="9" height="1" fill="#801010"/><circle cx="5" cy="11.5" r="4.2" fill="url(#gExc)"/><path d="M4.2,8.4 H5.8 L5.5,12.2 H4.5 Z" fill="#fff"/><rect x="4.3" y="13" width="1.4" height="1.3" fill="#fff"/></svg>
<div class="t" style="left:22px;letter-spacing:0.12px;top:531px;color:#000">kitchen.html</div>
<div class="t" style="left:214px;top:531px;color:#000">Textdateien sind unterschiedlich</div>
<div class="t r dt" style="left:425px;width:135px;top:531px;color:#000"><span class="sp">* </span>21.06.2025 03:25:52</div>
<div class="t r dt" style="left:543px;width:135px;top:531px;color:#000">21.06.2025 01:02:30</div>
<div class="t" style="left:691px;top:531px;color:#000">html</div>
<div class="t r dt" style="left:773px;width:88px;top:531px;color:#000">4</div>
<div class="a" style="left:20px;top:549px;width:847px;height:19px;background:#efdb7c"></div>
<svg style="left:4px;top:550px" width="16" height="17" viewBox="0 0 16 17"><path d="M1.5,0.5 H11 L14.5,4 V15.5 H1.5 Z" fill="#eeeefc" stroke="#6060f0"/><rect x="3" y="3" width="5" height="1" fill="#d02020"/><rect x="3" y="5" width="10" height="1" fill="#c01818"/><rect x="4" y="7" width="9" height="1" fill="#a01010"/><rect x="4" y="9" width="9" height="1" fill="#901010"/><rect x="4" y="11" width="9" height="1" fill="#801010"/><circle cx="5" cy="11.5" r="4.2" fill="url(#gExc)"/><path d="M4.2,8.4 H5.8 L5.5,12.2 H4.5 Z" fill="#fff"/><rect x="4.3" y="13" width="1.4" height="1.3" fill="#fff"/></svg>
<div class="t" style="left:22px;letter-spacing:0.12px;top:550px;color:#000">admin.php</div>
<div class="t" style="left:152px;letter-spacing:0.1px;top:550px;color:#000">php</div>
<div class="t" style="left:214px;top:550px;color:#000">Textdateien sind unterschiedlich</div>
<div class="t r dt" style="left:425px;width:135px;top:550px;color:#000"><span class="sp">* </span>21.06.2025 03:27:55</div>
<div class="t r dt" style="left:543px;width:135px;top:550px;color:#000">21.06.2025 01:02:31</div>
<div class="t" style="left:691px;top:550px;color:#000">php</div>
<div class="t r dt" style="left:773px;width:88px;top:550px;color:#000">7</div>
<div class="a" style="left:20px;top:568px;width:847px;height:19px;background:#efdb7c"></div>
<svg style="left:4px;top:569px" width="16" height="17" viewBox="0 0 16 17"><path d="M1.5,0.5 H11 L14.5,4 V15.5 H1.5 Z" fill="#eeeefc" stroke="#6060f0"/><rect x="3" y="3" width="5" height="1" fill="#d02020"/><rect x="3" y="5" width="10" height="1" fill="#c01818"/><rect x="4" y="7" width="9" height="1" fill="#a01010"/><rect x="4" y="9" width="9" height="1" fill="#901010"/><rect x="4" y="11" width="9" height="1" fill="#801010"/><circle cx="5" cy="11.5" r="4.2" fill="url(#gExc)"/><path d="M4.2,8.4 H5.8 L5.5,12.2 H4.5 Z" fill="#fff"/><rect x="4.3" y="13" width="1.4" height="1.3" fill="#fff"/></svg>
<div class="t" style="left:22px;letter-spacing:0.12px;top:569px;color:#000">kitchenbar.js</div>
<div class="t" style="left:214px;top:569px;color:#000">Textdateien sind unterschiedlich</div>
<div class="t r dt" style="left:425px;width:135px;top:569px;color:#000"><span class="sp">* </span>21.06.2025 03:43:10</div>
<div class="t r dt" style="left:543px;width:135px;top:569px;color:#000">21.06.2025 01:02:30</div>
<div class="t" style="left:691px;top:569px;color:#000">js</div>
<div class="t r dt" style="left:773px;width:88px;top:569px;color:#000">7</div>
<div class="a" style="left:20px;top:587px;width:847px;height:19px;background:#efdb7c"></div>
<svg style="left:4px;top:588px" width="16" height="17" viewBox="0 0 16 17"><path d="M1.5,0.5 H11 L14.5,4 V15.5 H1.5 Z" fill="#eeeefc" stroke="#6060f0"/><rect x="3" y="3" width="5" height="1" fill="#d02020"/><rect x="3" y="5" width="10" height="1" fill="#c01818"/><rect x="4" y="7" width="9" height="1" fill="#a01010"/><rect x="4" y="9" width="9" height="1" fill="#901010"/><rect x="4" y="11" width="9" height="1" fill="#801010"/><circle cx="5" cy="11.5" r="4.2" fill="url(#gExc)"/><path d="M4.2,8.4 H5.8 L5.5,12.2 H4.5 Z" fill="#fff"/><rect x="4.3" y="13" width="1.4" height="1.3" fill="#fff"/></svg>
<div class="t" style="left:22px;letter-spacing:0.12px;top:588px;color:#000">waiter.html</div>
<div class="t" style="left:214px;top:588px;color:#000">Textdateien sind unterschiedlich</div>
<div class="t r dt" style="left:425px;width:135px;top:588px;color:#000"><span class="sp">* </span>21.06.2025 03:51:11</div>
<div class="t r dt" style="left:543px;width:135px;top:588px;color:#000">21.06.2025 01:04:29</div>
<div class="t" style="left:691px;top:588px;color:#000">html</div>
<div class="t r dt" style="left:773px;width:88px;top:588px;color:#000">18</div>
<div class="a" style="left:20px;top:606px;width:847px;height:19px;background:#efdb7c"></div>
<svg style="left:4px;top:607px" width="16" height="17" viewBox="0 0 16 17"><path d="M1.5,0.5 H11 L14.5,4 V15.5 H1.5 Z" fill="#eeeefc" stroke="#6060f0"/><rect x="3" y="3" width="5" height="1" fill="#d02020"/><rect x="3" y="5" width="10" height="1" fill="#c01818"/><rect x="4" y="7" width="9" height="1" fill="#a01010"/><rect x="4" y="9" width="9" height="1" fill="#901010"/><rect x="4" y="11" width="9" height="1" fill="#801010"/><circle cx="5" cy="11.5" r="4.2" fill="url(#gExc)"/><path d="M4.2,8.4 H5.8 L5.5,12.2 H4.5 Z" fill="#fff"/><rect x="4.3" y="13" width="1.4" height="1.3" fill="#fff"/></svg>
<div class="t" style="left:22px;letter-spacing:0.12px;top:607px;color:#000">paydesk.html</div>
<div class="t" style="left:214px;top:607px;color:#000">Textdateien sind unterschiedlich</div>
<div class="t r dt" style="left:425px;width:135px;top:607px;color:#000"><span class="sp">* </span>21.06.2025 04:05:57</div>
<div class="t r dt" style="left:543px;width:135px;top:607px;color:#000">21.06.2025 01:05:12</div>
<div class="t" style="left:691px;top:607px;color:#000">html</div>
<div class="t r dt" style="left:773px;width:88px;top:607px;color:#000">24</div>
<div class="a" style="left:20px;top:625px;width:847px;height:19px;background:#efdb7c"></div>
<svg style="left:4px;top:626px" width="16" height="17" viewBox="0 0 16 17"><path d="M1.5,0.5 H11 L14.5,4 V15.5 H1.5 Z" fill="#eeeefc" stroke="#6060f0"/><rect x="3" y="3" width="5" height="1" fill="#d02020"/><rect x="3" y="5" width="10" height="1" fill="#c01818"/><rect x="4" y="7" width="9" height="1" fill="#a01010"/><rect x="4" y="9" width="9" height="1" fill="#901010"/><rect x="4" y="11" width="9" height="1" fill="#801010"/><circle cx="5" cy="11.5" r="4.2" fill="url(#gExc)"/><path d="M4.2,8.4 H5.8 L5.5,12.2 H4.5 Z" fill="#fff"/><rect x="4.3" y="13" width="1.4" height="1.3" fill="#fff"/></svg>
<div class="t" style="left:22px;letter-spacing:0.12px;top:626px;color:#000">queuecontent.php</div>
<div class="t" style="left:152px;letter-spacing:0.1px;top:626px;color:#000">php</div>
<div class="t" style="left:214px;top:626px;color:#000">Textdateien sind unterschiedlich</div>
<div class="t r dt" style="left:425px;width:135px;top:626px;color:#000"><span class="sp">* </span>21.06.2025 15:27:32</div>
<div class="t r dt" style="left:543px;width:135px;top:626px;color:#000">21.06.2025 01:02:31</div>
<div class="t" style="left:691px;top:626px;color:#000">php</div>
<div class="t r dt" style="left:773px;width:88px;top:626px;color:#000">35</div>
<div class="a" style="left:0;top:659px;width:887px;height:35px;background:#f0f0f0"></div>
<div class="t" style="left:4px;top:661px;letter-spacing:-0.08px">Ausführungszeit: 456 ms</div>
<div class="t" style="left:471px;top:661px">Voller Inhalt</div>
<div class="t" style="left:612px;top:661px;letter-spacing:0.5px">*.*</div>
<div class="t" style="left:634px;top:679px;letter-spacing:-0.15px">Objekt 1 von 27</div>
<div class="t" style="left:820px;top:679px;letter-spacing:0.3px">Num</div>
</body></html>
